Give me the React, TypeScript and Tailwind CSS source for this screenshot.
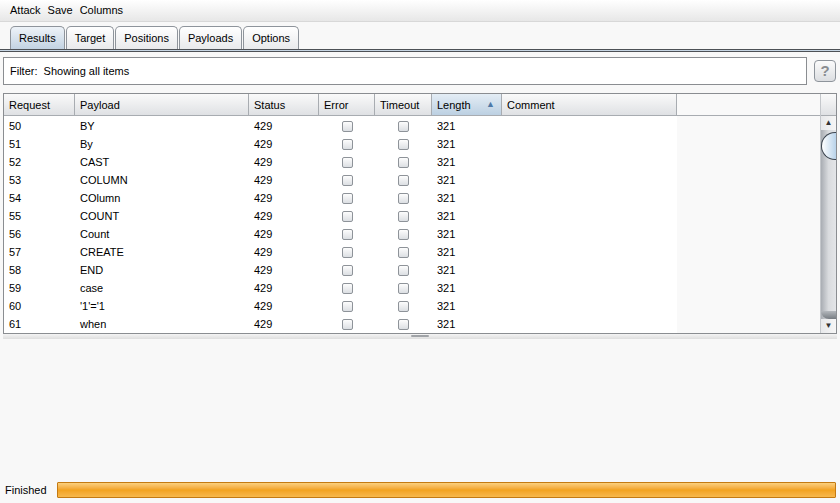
import React from 'react';

const rows: [number, string][] = [
  [50, 'BY'],
  [51, 'By'],
  [52, 'CAST'],
  [53, 'COLUMN'],
  [54, 'COlumn'],
  [55, 'COUNT'],
  [56, 'Count'],
  [57, 'CREATE'],
  [58, 'END'],
  [59, 'case'],
  [60, "'1'='1"],
  [61, 'when'],
];

const tabs = ['Results', 'Target', 'Positions', 'Payloads', 'Options'];

function Check() {
  return (
    <span className="block w-[11px] h-[11px] rounded-[2px] border border-[#8e9399] bg-gradient-to-b from-[#fdfdfd] to-[#dcdfe3]" />
  );
}

function Th({ w, children, active }: { w: string; children: React.ReactNode; active?: boolean }) {
  return (
    <div
      className={`${w} h-full flex items-center pt-px px-[5px] border-r border-[#a8acb1] ${
        active ? 'bg-gradient-to-b from-[#e4edf5] to-[#bcd0e2]' : 'bg-gradient-to-b from-[#fafafa] to-[#dfe1e4]'
      }`}
    >
      {children}
    </div>
  );
}

export default function App() {
  return (
    <div
      className="w-[840px] h-[503px] bg-[#f8f8f8] flex flex-col text-[11px] text-black overflow-hidden"
      style={{ fontFamily: '"Liberation Sans", Arial, sans-serif' }}
    >
      {/* menu */}
      <div className="h-[22px] flex items-center gap-[7px] px-[10px] bg-gradient-to-b from-[#ffffff] to-[#e7e7e7] border-b border-[#d8d8d8]">
        <span>Attack</span>
        <span>Save</span>
        <span>Columns</span>
      </div>

      {/* tabs */}
      <div className="pt-[4px] px-[10px] flex items-end h-[27px] gap-px">
        {tabs.map((t, i) => (
          <div
            key={t}
            className={`h-[23px] flex items-center px-[8px] border border-b-0 border-[#8e949b] rounded-t-[5px] ${
              i === 0
                ? 'bg-gradient-to-b from-[#eef3f8] to-[#c3d3e2]'
                : 'bg-gradient-to-b from-[#ffffff] to-[#e9eaec]'
            }`}
          >
            {t}
          </div>
        ))}
      </div>
      <div className="h-[3px] border-t border-b border-[#4d5156] bg-[#c6d5e3]" />

      {/* filter */}
      <div className="flex items-center pl-[3px] pr-[4px] pt-[5px] gap-[7px]">
        <div className="w-[806px] h-[28px] bg-white border border-[#8a8d91] flex items-center px-[6px]">
          Filter:&nbsp; Showing all items
        </div>
        <div className="w-[22px] h-[22px] rounded-[4px] border border-[#8e949b] bg-gradient-to-b from-[#fbfbfb] to-[#dcdee1] flex items-center justify-center text-[#8a8d91] font-bold text-[15px]">
          ?
        </div>
      </div>

      {/* table */}
      <div className="mt-[8px] mx-[3px] w-[834px] h-[241px] border border-[#8a8d91] flex bg-white">
        <div className="flex-1 flex flex-col">
          <div className="h-[22px] flex bg-[#f9f9f9] border-b border-[#a8acb1]">
            <Th w="w-[71px]">Request</Th>
            <Th w="w-[174px]">Payload</Th>
            <Th w="w-[70px]">Status</Th>
            <Th w="w-[56px]">Error</Th>
            <Th w="w-[57px]">Timeout</Th>
            <Th w="w-[70px]" active>
              <span className="flex-1">Length</span>
              <span className="text-[9px] text-[#4e79a7] mr-[1px]">▲</span>
            </Th>
            <Th w="w-[175px]">Comment</Th>
            <div className="flex-1 bg-[#f9f9f9]" />
          </div>
          <div className="flex-1 flex">
            <div className="w-[673px]">
              {rows.map(([n, p]) => (
                <div key={n} className="h-[18px] flex items-center pt-[2px]">
                  <div className="w-[71px] px-[5px]">{n}</div>
                  <div className="w-[174px] px-[5px]">{p}</div>
                  <div className="w-[70px] px-[5px]">429</div>
                  <div className="w-[56px] flex justify-center">
                    <Check />
                  </div>
                  <div className="w-[57px] flex justify-center">
                    <Check />
                  </div>
                  <div className="w-[70px] px-[5px]">321</div>
                  <div className="w-[175px]" />
                </div>
              ))}
            </div>
            <div className="flex-1 bg-[#f9f9f9]" />
          </div>
        </div>
        {/* scrollbar */}
        <div className="w-[16px] flex flex-col border-l border-[#c4c7cb]">
          <div className="h-[22px] bg-gradient-to-b from-[#fafafa] to-[#dfe1e4] border-b border-[#a8acb1]" />
          <div className="h-[14px] flex items-center justify-center text-[8px] text-[#333] bg-gradient-to-r from-[#e8e9eb] to-[#f6f6f6]">
            ▲
          </div>
          <div className="flex-1 relative bg-gradient-to-r from-[#a9adb3] via-[#d9dbde] to-[#e3e5e8]">
            <div className="absolute left-0 top-[2px] w-[15px] h-[28px] rounded-l-full border border-[#3c4550] border-r-0 bg-gradient-to-r from-[#ffffff] to-[#b9d3ea]" />
            <div className="absolute left-0 bottom-0 w-[15px] h-[8px] rounded-bl-full bg-gradient-to-b from-[#b4b8bd] to-[#777c82]" />
          </div>
          <div className="h-[14px] flex items-center justify-center text-[8px] text-[#333] bg-gradient-to-r from-[#e8e9eb] to-[#f6f6f6]">
            ▼
          </div>
        </div>
      </div>

      {/* splitter */}
      <div className="h-[5px] mx-[3px] bg-gradient-to-b from-[#f4f4f4] to-[#dedede] flex justify-center items-start">
        <div className="w-[18px] h-[2px] mt-[1px] bg-[#a0a3a7] rounded-full" />
      </div>

      <div className="flex-1" />

      {/* status */}
      <div className="h-[18px] mb-[4px] flex items-center gap-[10px] pl-[5px] pr-[4px]">
        <span>Finished</span>
        <div className="flex-1 h-[16px] border border-[#c47a12] rounded-[1px] bg-gradient-to-b from-[#fbd07c] via-[#f2a21e] to-[#f7b84b]" />
      </div>
    </div>
  );
}
